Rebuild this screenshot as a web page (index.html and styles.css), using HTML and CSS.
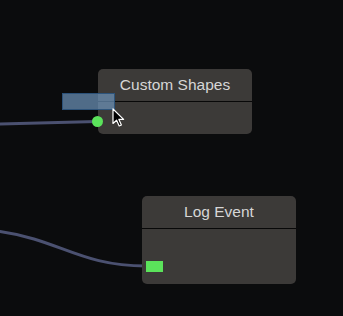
FILE: index.html
```html
<!DOCTYPE html>
<html lang="en">
<head>
<meta charset="UTF-8" />
<title>Graph</title>
<link rel="stylesheet" href="styles.css">
</head>
<body>
<div class="canvas">
  <svg class="edges" width="343" height="316" viewBox="0 0 343 316">
    <path d="M0 124 L97 121.5" />
    <path d="M0 231.5 C 60 240, 80 266, 146 266" />
  </svg>

  <div class="node node-shapes">
    <div class="node-title">Custom Shapes</div>
    <div class="node-body"></div>
  </div>

  <div class="node node-log">
    <div class="node-title">Log Event</div>
    <div class="node-body">
      <span class="port-square"></span>
    </div>
  </div>

  <span class="port-dot"></span>
  <div class="drag-box"></div>

  <svg class="cursor" width="14" height="20" viewBox="0 0 14 20">
    <path d="M1 1 L1 15.5 L4.6 12.2 L7.2 18 L9.4 17 L6.9 11.4 L11.6 11.4 Z" />
  </svg>
</div>
</body>
</html>
```

FILE: styles.css
```css
body { margin: 0; background: #0b0c0d; font-family: "Liberation Sans", Arial, sans-serif; }
.canvas { position: relative; width: 343px; height: 316px; overflow: hidden; }

.edges { position: absolute; left: 0; top: 0; }
.edges path { fill: none; stroke: #4b5170; stroke-width: 3; stroke-linecap: round; }

.node {
  position: absolute; width: 154px; background: #3c3a38; border-radius: 5px;
  display: flex; flex-direction: column; color: #d6d6d6;
}
.node-title {
  height: 33px; border-bottom: 1px solid #080808;
  display: flex; align-items: center; justify-content: center;
  font-size: 15.5px; box-sizing: border-box;
}
.node-body { flex: 1; position: relative; }
.node-shapes { left: 98px; top: 69px; height: 65px; }
.node-log { left: 142px; top: 196px; height: 88px; }

.port-square {
  position: absolute; left: 4px; bottom: 12px; width: 17px; height: 11px; background: #5be35b;
}
.port-dot {
  position: absolute; left: 92px; top: 116px; width: 11px; height: 11px;
  border-radius: 50%; background: #5be35b;
}
.drag-box {
  position: absolute; left: 62px; top: 93px; width: 51px; height: 15px;
  background: rgba(110, 150, 190, 0.7); border: 1px solid rgba(40, 80, 120, 0.9);
}
.cursor { position: absolute; left: 112px; top: 108px; }
.cursor path { fill: #000; stroke: #fff; stroke-width: 1.2; stroke-linejoin: round; }
```
